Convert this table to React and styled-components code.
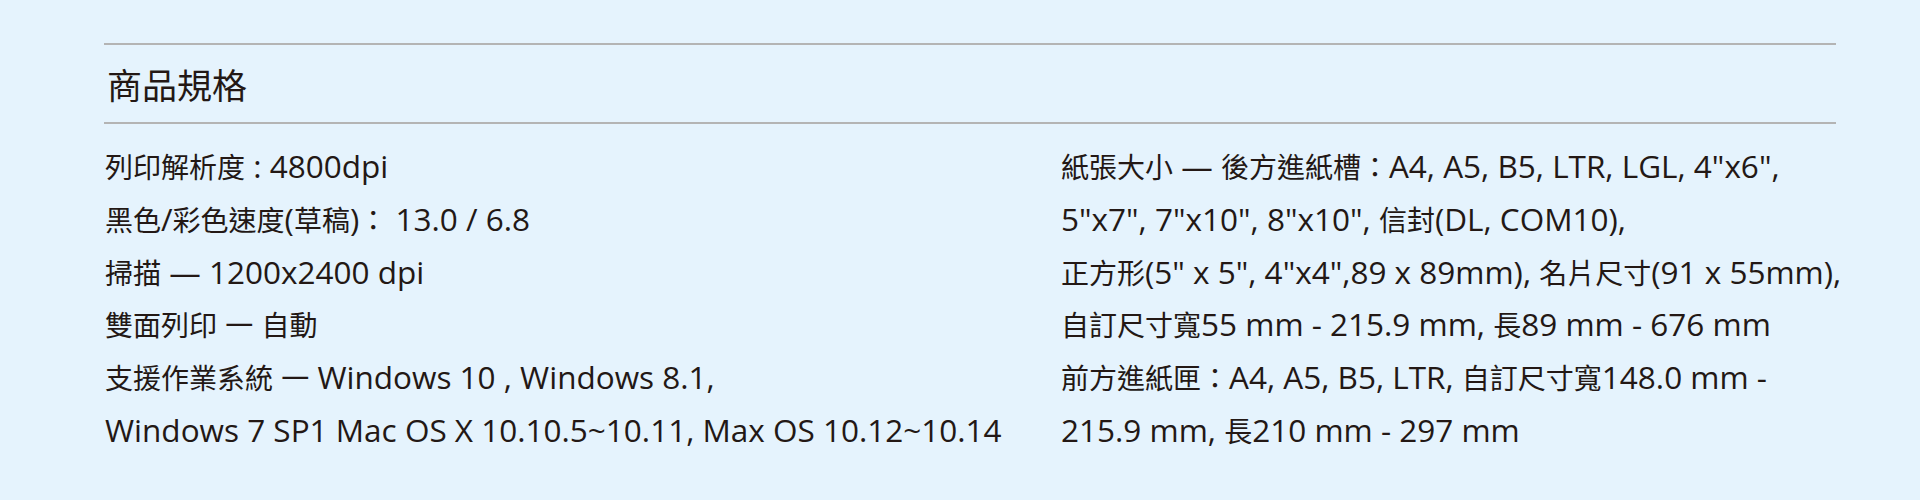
import styled, { createGlobalStyle } from "styled-components";

const GlobalStyle = createGlobalStyle`
  html, body {
    margin: 0;
    padding: 0;
    background: #e5f3fd;
  }
  body {
    font-family: "Noto Sans CJK TC", "Noto Sans", sans-serif;
    color: #231815;
  }
`;

const specs = {
  left: [
    "列印解析度 : 4800dpi",
    "黑色/彩色速度(草稿)： 13.0 / 6.8",
    "掃描 — 1200x2400 dpi",
    "雙面列印 一 自動",
    "支援作業系統 一 Windows 10 , Windows 8.1,",
    "Windows 7 SP1 Mac OS X 10.10.5~10.11, Max OS 10.12~10.14",
  ],
  right: [
    "紙張大小 — 後方進紙槽：A4, A5, B5, LTR, LGL, 4\"x6\",",
    "5\"x7\", 7\"x10\", 8\"x10\", 信封(DL, COM10),",
    "正方形(5\" x 5\", 4\"x4\",89 x 89mm), 名片尺寸(91 x 55mm),",
    "自訂尺寸寬55 mm - 215.9 mm, 長89 mm - 676 mm",
    "前方進紙匣：A4, A5, B5, LTR, 自訂尺寸寬148.0 mm -",
    "215.9 mm, 長210 mm - 297 mm",
  ],
};

// latin runs are set a bit larger, like the JhengHei latin glyphs
const CJK = /([\u2E80-\u9FFF\u3000-\u303F\uFF00-\uFFEF]+)/;

function SpecLine({ text }) {
  return (
    <Line>
      {text.split(CJK).map((part, i) =>
        !part ? null : CJK.test(part) ? (
          <span key={i}>{part}</span>
        ) : (
          <Latin key={i}>{part}</Latin>
        )
      )}
    </Line>
  );
}

export default function App() {
  return (
    <>
      <GlobalStyle />
      <Section>
        <Header>
          <Title>商品規格</Title>
        </Header>
        <SpecGrid>
          <Column>
            {specs.left.map((t, i) => (
              <SpecLine key={i} text={t} />
            ))}
          </Column>
          <Column>
            {specs.right.map((t, i) => (
              <SpecLine key={i} text={t} />
            ))}
          </Column>
        </SpecGrid>
      </Section>
    </>
  );
}

const Section = styled.section`
  width: 1732px;
  padding: 43px 0 40px 104px;
`;

const Header = styled.div`
  height: 77px;
  border-top: 2px solid #b4b4b4;
  border-bottom: 2px solid #b4b4b4;
  display: flex;
  align-items: center;
`;

const Title = styled.h2`
  margin: 0 0 0 3px;
  font-size: 35px;
  font-weight: 400;
  line-height: 1;
`;

const SpecGrid = styled.div`
  display: grid;
  grid-template-columns: 956px 1fr;
  padding-top: 16px;
`;

const Column = styled.div`
  display: flex;
  flex-direction: column;
`;

const Line = styled.div`
  font-size: 28px;
  line-height: 52.8px;
  height: 52.8px;
  white-space: nowrap;
  padding-left: 1px;

  span {
    line-height: 1;
  }
`;

const Latin = styled.span`
  font-family: "Open Sans", "Noto Sans", sans-serif;
  font-size: 31.5px;
`;
